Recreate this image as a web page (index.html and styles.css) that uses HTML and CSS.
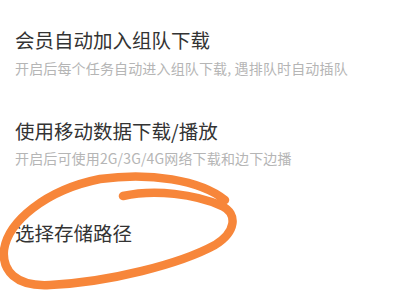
FILE: index.html
```html
<!DOCTYPE html>
<html lang="zh-CN">
<head>
<meta charset="utf-8">
<link rel="stylesheet" href="styles.css">
</head>
<body>
<div class="page">
  <div class="setting">
    <div class="title">会员自动加入组队下载</div>
    <div class="desc">开启后每个任务自动进入组队下载, 遇排队时自动插队</div>
  </div>
  <div class="setting">
    <div class="title">使用移动数据下载/播放</div>
    <div class="desc">开启后可使用2G/3G/4G网络下载和边下边播</div>
  </div>
  <div class="setting single">
    <div class="title">选择存储路径</div>
  </div>
  <svg class="scribble" width="400" height="300" viewBox="0 0 400 300">
    <path d="M123 196 C155 189 195 194 222 206 C238 214 236 232 215 245 C180 264 110 282 50 285 C15 287 2 270 4 250 C8 222 45 190 100 179 C150 172 200 180 225 200" fill="none" stroke="#f7863a" stroke-width="8.5" stroke-linecap="round" stroke-linejoin="round"/>
  </svg>
</div>
</body>
</html>
```
FILE: styles.css
```css
html, body {
  margin: 0;
  padding: 0;
  background: #ffffff;
}
.page {
  position: relative;
  width: 400px;
  height: 300px;
  overflow: hidden;
  padding-top: 6.5px;
  box-sizing: border-box;
  font-family: "Noto Sans CJK SC", "Noto Sans", sans-serif;
}
.setting {
  padding: 19.5px 15px;
  display: flex;
  flex-direction: column;
}
.setting.single {
  min-height: 90px;
  padding-top: 0;
  padding-bottom: 0;
  justify-content: center;
  box-sizing: border-box;
}
.title {
  font-size: 19.5px;
  line-height: 28px;
  font-weight: 400;
  color: #333333;
}
.desc {
  margin-top: 3.5px;
  font-size: 14px;
  line-height: 20px;
  letter-spacing: 0.15px;
  color: #b5b5b5;
}
.scribble {
  position: absolute;
  left: 0;
  top: 0;
}
```
